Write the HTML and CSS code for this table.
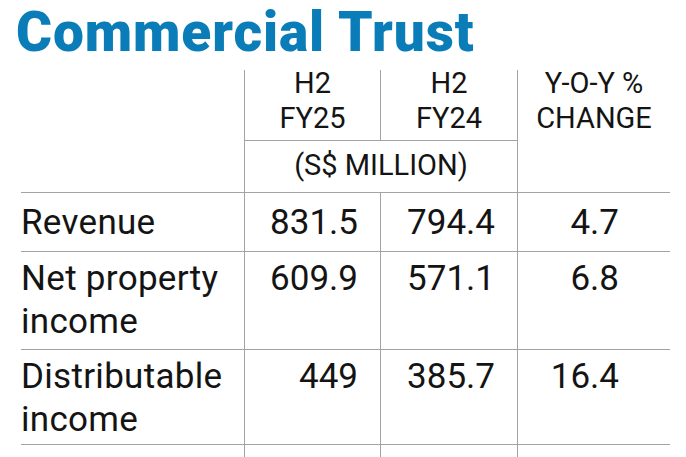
FILE: index.html
```html
<!DOCTYPE html>
<html lang="en">
<head>
<meta charset="utf-8">
<title>Commercial Trust</title>
<link rel="stylesheet" href="styles.css">
</head>
<body>
<div class="page">
  <h1 class="title">Commercial Trust</h1>
  <div class="table">
    <div class="cell head-label"></div>
    <div class="cell head col2"><div class="head-text">H2<br>FY25</div></div>
    <div class="cell head col3"><div class="head-text">H2<br>FY24</div></div>
    <div class="cell head col4 head-yoy"><div class="head-text">Y-O-Y %<br>CHANGE</div></div>
    <div class="cell head unit">(S$ MILLION)</div>

    <div class="cell label single">Revenue</div>
    <div class="cell num single">831.5</div>
    <div class="cell num single">794.4</div>
    <div class="cell num pct single">4.7</div>

    <div class="cell label">Net property<br>income</div>
    <div class="cell num">609.9</div>
    <div class="cell num">571.1</div>
    <div class="cell num pct">6.8</div>

    <div class="cell label">Distributable<br>income</div>
    <div class="cell num">449</div>
    <div class="cell num">385.7</div>
    <div class="cell num pct">16.4</div>

    <div class="cell tail"></div>
    <div class="cell tail line"></div>
    <div class="cell tail line"></div>
    <div class="cell tail line"></div>
  </div>
</div>
</body>
</html>
```
FILE: styles.css
```css
html, body {
  margin: 0;
  padding: 0;
  background: #ffffff;
  overflow: hidden;
}

.page {
  width: 686px;
  height: 457px;
  font-family: Roboto, "Liberation Sans", Arial, sans-serif;
  color: #141414;
}

.title {
  margin: 0 0 5px 0;
  padding-left: 16px;
  font-family: Roboto, "Liberation Sans", Arial, sans-serif;
  font-weight: 900;
  font-size: 55px;
  line-height: 65px;
  color: #0a7db8;
  letter-spacing: 0.9px;
  white-space: nowrap;
}

.table {
  margin-left: 21px;
  width: 649px;
  display: grid;
  grid-template-columns: 223px 136px 137px 153px;
  grid-template-rows: 71px 52px 59px 98px 95px 12px;
}

.cell {
  box-sizing: border-box;
  border-bottom: 1px solid #a3a3a3;
}

.head {
  border-left: 1px solid #a3a3a3;
  font-size: 29px;
  line-height: 35px;
  text-align: center;
}

.head-text {
  margin-top: -4px;
}

.head-label {
  grid-column: 1;
  grid-row: 1 / 3;
}

.col2 { grid-column: 2; grid-row: 1; }
.col3 { grid-column: 3; grid-row: 1; }
.head-yoy { grid-column: 4; grid-row: 1 / 3; }

.unit {
  grid-column: 2 / 4;
  grid-row: 2;
  padding-top: 7px;
}

.label,
.num {
  font-size: 35px;
  line-height: 43px;
  padding-top: 5px;
}

.label {
  padding-left: 0;
  white-space: nowrap;
  letter-spacing: 0.3px;
}

.num {
  border-left: 1px solid #a3a3a3;
  text-align: right;
  padding-right: 22px;
}

.pct {
  padding-right: 51px;
}

.single {
  padding-top: 8px;
}

.tail {
  border-bottom: none;
}

.tail.line {
  border-left: 1px solid #a3a3a3;
}
```
